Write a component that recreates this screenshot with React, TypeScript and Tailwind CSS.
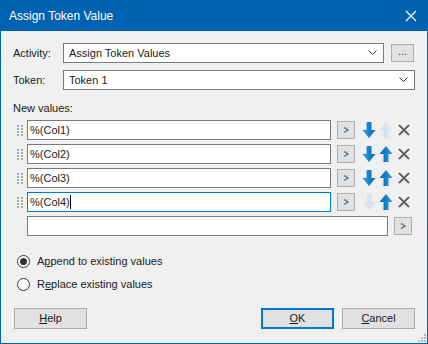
import React from 'react';

const font = { fontFamily: "'Liberation Sans', Arial, sans-serif" };

function Grip() {
  return (
    <div className="grid grid-cols-2 gap-x-[2px] gap-y-[1px] w-[6px] ml-[16px] mr-[4px]">
      {[...Array(8)].map((_, i) => (
        <div key={i} className="w-[2px] h-[2px] bg-[#a8a8a8]" />
      ))}
    </div>
  );
}

function Chevron() {
  return (
    <svg width="8" height="8" viewBox="0 0 8 8">
      <path d="M2 1.5 L6 4 L2 6.5" fill="none" stroke="#3c6e9e" strokeWidth="1.3" />
      <path d="M2 1.5 L4.5 3" fill="none" stroke="#d07a3a" strokeWidth="1.3" />
    </svg>
  );
}

function SmallButton() {
  return (
    <div className="w-[18px] h-[18px] bg-[#e1e1e1] border border-[#adadad] flex items-center justify-center">
      <Chevron />
    </div>
  );
}

function Arrow({ up, disabled }: { up?: boolean; disabled?: boolean }) {
  const id = `g${up ? 'u' : 'd'}${disabled ? 'x' : ''}`;
  return (
    <svg width="14" height="18" viewBox="0 0 14 18" className={up ? 'rotate-180' : ''}>
      <defs>
        <linearGradient id={id} x1="0" y1="0" x2="1" y2="0">
          <stop offset="0" stopColor={disabled ? '#e2e9f0' : '#2b9be4'} />
          <stop offset="1" stopColor={disabled ? '#d2dde8' : '#0868b0'} />
        </linearGradient>
      </defs>
      <path d="M4.5 1 H9.5 V9 H13.5 L7 17 L0.5 9 H4.5 Z" fill={`url(#${id})`} />
    </svg>
  );
}

function Close({ color = '#5f5f5f', size = 12, w = 1.8 }: { color?: string; size?: number; w?: number }) {
  return (
    <svg width={size} height={size} viewBox="0 0 12 12">
      <path d="M1 1 L11 11 M11 1 L1 11" stroke={color} strokeWidth={w} />
    </svg>
  );
}

function DropArrow() {
  return (
    <svg width="9" height="6" viewBox="0 0 9 6" className="mr-[6px]">
      <path d="M0.5 0.5 L4.5 4.5 L8.5 0.5" fill="none" stroke="#333" strokeWidth="1" />
    </svg>
  );
}

function ValueRow({ text, first, last, focused }: { text: string; first?: boolean; last?: boolean; focused?: boolean }) {
  return (
    <div className="flex items-center h-[20px]">
      <Grip />
      <div className={`w-[304px] h-[20px] bg-white border flex items-center pl-[2px] ${focused ? 'border-[#0078d7]' : 'border-[#7a7a7a]'}`}>
        <span>{text}</span>
        {focused && <span className="w-px h-[14px] bg-black" />}
      </div>
      <div className="ml-[6px]">
        <SmallButton />
      </div>
      <div className="flex items-center ml-[7px] gap-[3px]">
        <Arrow disabled={last} />
        <Arrow up disabled={first} />
        <div className="ml-[2px]">
          <Close />
        </div>
      </div>
    </div>
  );
}

function Radio({ checked, children }: { checked?: boolean; children: React.ReactNode }) {
  return (
    <div className="flex items-center h-[16px] pl-[16px] gap-[7px]">
      <div className="w-[13px] h-[13px] rounded-full border border-[#333] bg-white flex items-center justify-center">
        {checked && <div className="w-[7px] h-[7px] rounded-full bg-[#333]" />}
      </div>
      <span>{children}</span>
    </div>
  );
}

function Button({ children, primary }: { children: React.ReactNode; primary?: boolean }) {
  return (
    <div
      className={`w-[73px] h-[21px] bg-[#e1e1e1] flex items-center justify-center ${primary ? 'border-2 border-[#0078d7]' : 'border border-[#adadad]'}`}
    >
      {children}
    </div>
  );
}

export default function App() {
  return (
    <div className="w-[428px] h-[344px] flex flex-col bg-[#0063b1] text-[11px] text-[#1a1a1a]" style={font}>
      {/* Title bar */}
      <div className="h-[31px] flex items-center justify-between pl-[9px] pr-[11px] text-white text-[12px]">
        <span>Assign Token Value</span>
        <Close color="#ffffff" size={12} w={1.2} />
      </div>

      {/* Body */}
      <div className="flex-1 mx-px mb-px bg-[#f0f0f0] relative flex flex-col pl-[12px] pr-[12px] pt-[12px]">
        <div className="flex items-center h-[20px]">
          <span className="w-[50px]">Activity:</span>
          <div className="w-[321px] h-[20px] bg-white border border-[#7a7a7a] flex items-center justify-between pl-[5px]">
            <span>Assign Token Values</span>
            <DropArrow />
          </div>
          <div className="ml-[7px] w-[23px] h-[18px] bg-[#e1e1e1] border border-[#adadad] flex items-center justify-center text-[#4b2a80] leading-none pb-[3px]">
            ...
          </div>
        </div>

        <div className="flex items-center h-[20px] mt-[7px]">
          <span className="w-[50px]">Token:</span>
          <div className="flex-1 h-[20px] bg-white border border-[#7a7a7a] flex items-center justify-between pl-[5px]">
            <span>Token 1</span>
            <DropArrow />
          </div>
        </div>

        <div className="mt-[11px] h-[15px] leading-[15px]">New values:</div>

        <div className="flex flex-col gap-[4px] mt-[4px] -ml-[12px]">
          <ValueRow text="%(Col1)" first />
          <ValueRow text="%(Col2)" />
          <ValueRow text="%(Col3)" />
          <ValueRow text="%(Col4)" last focused />
          <div className="flex items-center h-[20px]">
            <div className="w-[361px] h-[20px] bg-white border border-[#7a7a7a] ml-[26px]" />
            <div className="ml-[6px]">
              <SmallButton />
            </div>
          </div>
        </div>

        <div className="flex flex-col gap-[7px] mt-[17px] -ml-[12px]">
          <Radio checked>
            A<span className="underline">p</span>pend to existing values
          </Radio>
          <Radio>
            R<span className="underline">e</span>place existing values
          </Radio>
        </div>

        <div className="flex items-center mt-[16px] -ml-[13px]">
          <div className="ml-[14px]">
            <Button>
              <span className="underline">H</span>elp
            </Button>
          </div>
          <div className="ml-auto flex gap-[8px]">
            <Button primary>
              <span className="underline">O</span>K
            </Button>
            <Button>
              <span className="underline">C</span>ancel
            </Button>
          </div>
        </div>

        {/* resize grip */}
        <div className="absolute right-[1px] bottom-[1px] grid grid-cols-3 gap-px w-[8px]">
          {[0, 0, 1, 0, 1, 1, 1, 1, 1].map((v, i) => (
            <div key={i} className={`w-[2px] h-[2px] ${v ? 'bg-[#b8b8b8]' : ''}`} />
          ))}
        </div>
      </div>
    </div>
  );
}
